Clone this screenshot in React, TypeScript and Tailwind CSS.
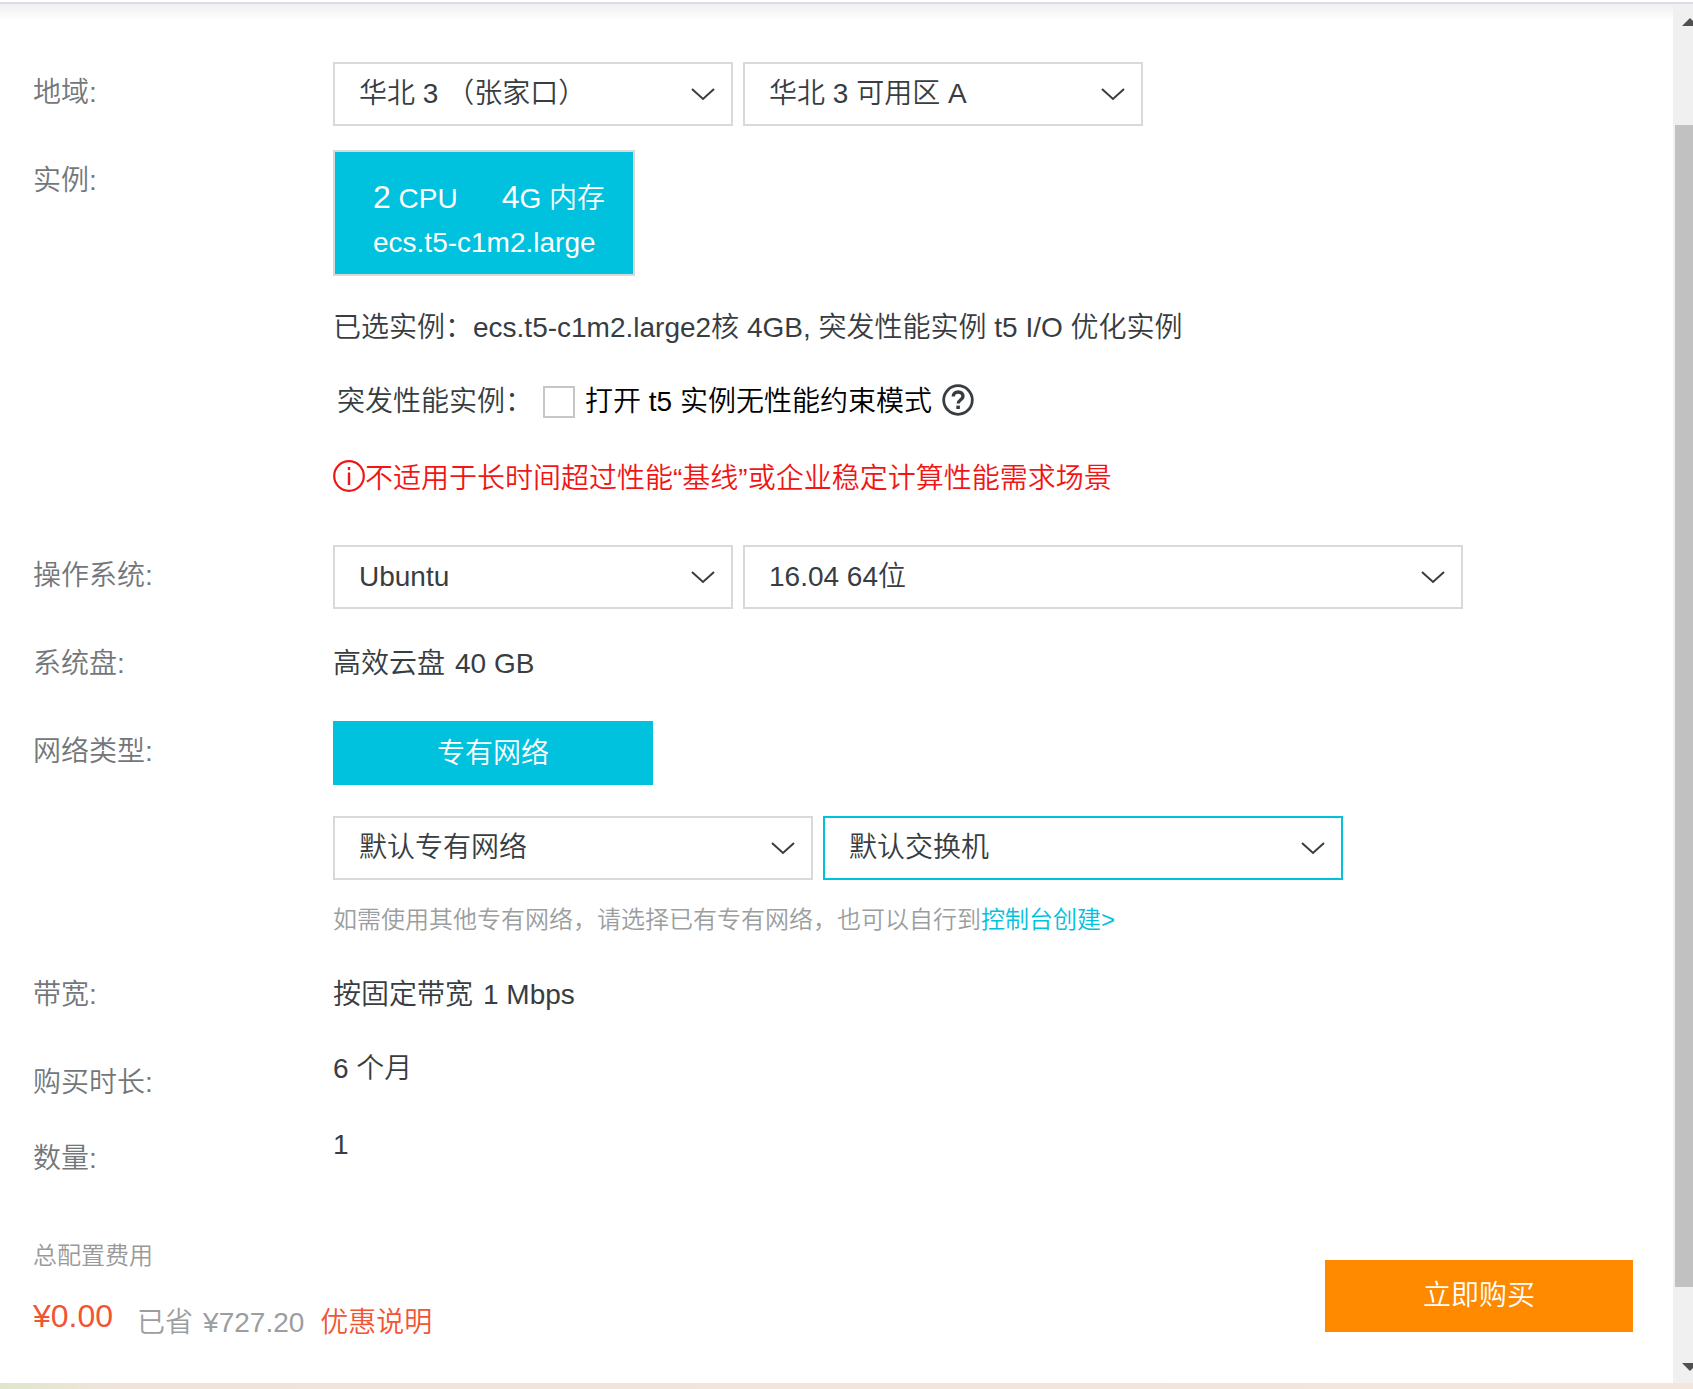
import { useState, type ReactNode } from 'react'

interface RowProps {
  label: string
  htmlFor?: string
  labelClass?: string
  className?: string
  children: ReactNode
}

function Row({ label, htmlFor, labelClass = '', className = '', children }: RowProps) {
  const labelStyle = `block w-[300px] shrink-0 text-[#73777a] ${labelClass}`
  return (
    <div className={`flex items-start ${className}`}>
      {htmlFor ? (
        <label htmlFor={htmlFor} className={labelStyle}>{label}</label>
      ) : (
        <div className={labelStyle}>{label}</div>
      )}
      <div className="min-w-0 flex-1">{children}</div>
    </div>
  )
}

interface SelectProps {
  id: string
  label: string
  value: string
  width: string
  active?: boolean
}

function Select({ id, label, value, width, active }: SelectProps) {
  return (
    <div className={`relative ${width}`}>
      <select
        id={id}
        aria-label={label}
        className={`block h-16 w-full appearance-none border-2 bg-white pr-14 pl-6 text-[#373d41] outline-none ${active ? 'border-[#00c1de]' : 'border-[#d9d9d9]'}`}
      >
        <option>{value}</option>
      </select>
      <svg
        className="pointer-events-none absolute top-6 right-4 h-4 w-7"
        viewBox="0 0 28 16"
        fill="none"
        stroke="#373d41"
        strokeWidth="2"
      >
        <path d="M3 3l11 10L25 3" />
      </svg>
    </div>
  )
}

function HelpIcon() {
  return (
    <svg className="h-8 w-8" viewBox="0 0 32 32" fill="none" stroke="#373d41">
      <circle cx="16" cy="16" r="14.3" strokeWidth="2.8" />
      <path d="M11.2 12.6c0-2.8 2-4.6 4.9-4.6s4.9 1.7 4.9 4.2c0 3.5-4.8 3.6-4.8 7.4" strokeWidth="3.4" />
      <path d="M16.1 21.6v3.4" strokeWidth="3.6" />
    </svg>
  )
}

function InfoIcon() {
  return (
    <svg className="h-8 w-8 shrink-0" viewBox="0 0 32 32" fill="none" stroke="#f11616">
      <circle cx="16" cy="16" r="14.8" strokeWidth="2.2" />
      <path d="M16 12.5V25M16 7v3" strokeWidth="2.4" />
    </svg>
  )
}

function Scrollbar() {
  return (
    <div className="flex w-5 shrink-0 flex-col overflow-hidden bg-[#f0f0f0] pl-0.5" aria-hidden="true">
      <svg className="mt-3.5 ml-[7px] h-2 w-4 shrink-0" viewBox="0 0 16 8" fill="#505050">
        <path d="M8 0l8 8H0z" />
      </svg>
      <div className="mt-[99px] mb-[76px] flex-1 bg-[#c1c1c1]" />
      <svg className="mb-3 ml-[7px] h-2 w-4 shrink-0" viewBox="0 0 16 8" fill="#505050">
        <path d="M8 8L0 0h16z" />
      </svg>
    </div>
  )
}

export default function App() {
  const [unlimited, setUnlimited] = useState(false)

  return (
    <div className="flex min-h-screen flex-col bg-white font-['Liberation_Sans','Noto_Sans_CJK_SC',sans-serif] text-[28px] leading-[42px] font-[350] text-[#373d41]">
      <div className="mt-0.5 h-0.5 bg-[#dcdce4]" />
      <div className="flex flex-1">
        <main className="flex min-w-0 flex-1 flex-col">
          <div className="h-4 bg-linear-to-b from-[#efefef] to-white" />

          <div className="px-[33px] pt-[42px]">
            <Row label="地域:" htmlFor="region" labelClass="pt-2.5">
              <div className="flex gap-2.5">
                <Select id="region" label="地域" value="华北 3 （张家口）" width="w-[400px]" />
                <Select id="zone" label="可用区" value="华北 3 可用区 A" width="w-[400px]" />
              </div>
            </Row>

            <Row label="实例:" labelClass="pt-2.5" className="mt-6">
              <button
                type="button"
                className="block h-[126px] w-[302px] border-2 border-[#d9d9d9] bg-[#00c1de] pt-3.5 pl-[38px] text-left leading-11 text-white"
              >
                <span className="flex items-baseline gap-11 whitespace-nowrap">
                  <span><span className="text-[32px]">2</span> CPU</span>
                  <span><span className="text-[32px]">4</span>G 内存</span>
                </span>
                <span className="block">ecs.t5-c1m2.large</span>
              </button>
              <p className="mt-[31px]">已选实例：ecs.t5-c1m2.large2核 4GB, 突发性能实例 t5 I/O 优化实例</p>
              <div className="mt-8 flex items-center pl-1">
                <span>突发性能实例：</span>
                <input
                  id="unlimited"
                  type="checkbox"
                  checked={unlimited}
                  onChange={(e) => setUnlimited(e.target.checked)}
                  className="ml-2.5 h-8 w-8 appearance-none border-2 border-[#c4c6c8] bg-white checked:bg-[#00c1de]"
                />
                <label htmlFor="unlimited" className="ml-2.5 text-black">打开 t5 实例无性能约束模式</label>
                <button type="button" aria-label="帮助" className="ml-2.5 pb-1">
                  <HelpIcon />
                </button>
              </div>
              <p className="mt-[35px] flex items-start text-[#f11616]">
                <span className="pt-0.5"><InfoIcon /></span>
                不适用于长时间超过性能“基线”或企业稳定计算性能需求场景
              </p>
            </Row>

            <Row label="操作系统:" htmlFor="os" labelClass="pt-2.5" className="mt-[45px]">
              <div className="flex gap-2.5">
                <Select id="os" label="操作系统" value="Ubuntu" width="w-[400px]" />
                <Select id="os-version" label="版本" value="16.04 64位" width="w-[720px]" />
              </div>
            </Row>

            <Row label="系统盘:" className="mt-[34px]">
              <div className="flex gap-2.5">
                <span>高效云盘</span>
                <span>40 GB</span>
              </div>
            </Row>

            <Row label="网络类型:" labelClass="pt-2.5" className="mt-9">
              <button type="button" className="block h-16 w-80 bg-[#00c1de] pt-0.5 text-white">专有网络</button>
              <div className="mt-[31px] flex gap-2.5">
                <Select id="vpc" label="专有网络" value="默认专有网络" width="w-[480px]" />
                <Select id="vswitch" label="交换机" value="默认交换机" width="w-[520px]" active />
              </div>
              <p className="mt-5 text-2xl leading-10 text-[#9b9ea0]">
                如需使用其他专有网络，请选择已有专有网络，也可以自行到<a href="#console" className="text-[#00c1de]">控制台创建&gt;</a>
              </p>
            </Row>

            <Row label="带宽:" className="mt-[34px]">
              <div className="flex gap-2.5">
                <span>按固定带宽</span>
                <span>1 Mbps</span>
              </div>
            </Row>
            <Row label="购买时长:" labelClass="pt-3.5" className="mt-8">6 个月</Row>
            <Row label="数量:" labelClass="pt-3.5" className="mt-5">1</Row>
          </div>

          <footer className="mt-auto flex items-start justify-between pr-10 pb-[39px] pl-[33px]">
            <div>
              <div className="text-2xl leading-10 text-[#999]">总配置费用</div>
              <div className="mt-5 flex items-start">
                <span className="text-[32px] leading-10 text-[#f15533]">¥0.00</span>
                <span className="mt-1.5 ml-6 flex gap-2.5 text-[#9b9ea0]">
                  <span>已省</span>
                  <span>¥727.20</span>
                </span>
                <a href="#discount" className="mt-1.5 ml-4 text-[#f15533]">优惠说明</a>
              </div>
            </div>
            <button type="button" className="mt-6 h-[72px] w-[308px] bg-[#ff8a00] text-white">立即购买</button>
          </footer>
        </main>
        <Scrollbar />
      </div>
      <div className="h-1.5 bg-linear-to-r from-[#dfe6cb] from-0% via-[#f0e4d8] via-6% to-[#f4e6da]" />
    </div>
  )
}
